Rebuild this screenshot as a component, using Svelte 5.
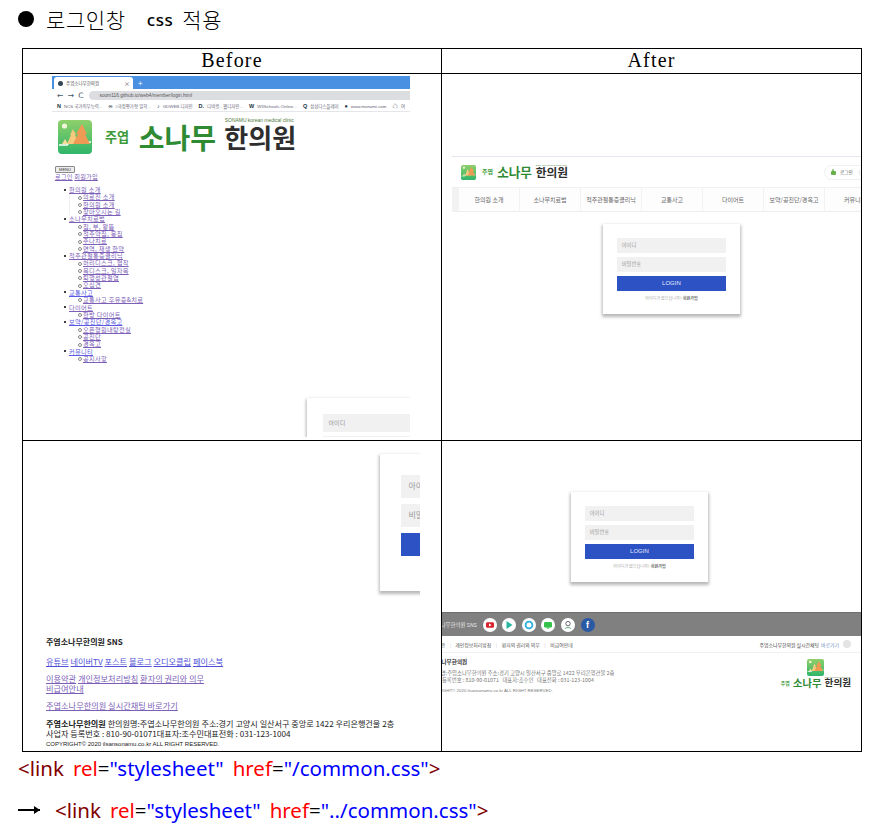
<script>
  const menu = [
    { t: '한의원 소개', c: ['의료진 소개', '한의원 소개', '찾아오시는 길'] },
    { t: '소나무치료법', c: ['침, 부, 왕뜸', '척추약침, 봉침', '추나치료', '면역, 재생 한약'] },
    { t: '척추관절통증클리닉', c: ['허리디스크, 협착', '목디스크, 일자목', '퇴행성관절염', '오십견'] },
    { t: '교통사고', blue: true, c: ['교통사고 후유증&치료'] },
    { t: '다이어트', c: ['한방 다이어트'] },
    { t: '보약/공진단/경옥고', blue: true, c: ['오픈형원내탕전실', '공진단', '경옥고'] },
    { t: '커뮤니티', blue: true, c: ['공지사항'] }
  ];
  const nav = ['한의원 소개', '소나무치료법', '척추관절통증클리닉', '교통사고', '다이어트', '보약/공진단/경옥고', '커뮤니티'];
  const marks = ['N', '∞', '♪', 'D.', 'W', 'Q', '●', '☁'];
  const bookmarks = ['NCS 국가직무능력...', '#과정평가형 일학...', 'GDWEB 디자인', '디비컷 - 웹디자인...', 'W3Schools Online...', '삼성디스플레이', 'www.monami.com', '여'];
</script>

{#snippet icon(cls)}
  <svg class={cls} viewBox="0 0 34 34">
    <defs>
      <linearGradient id="leaf" x1="0" y1="0" x2="0" y2="1">
        <stop offset="0" stop-color="#8fd06a" />
        <stop offset="1" stop-color="#2fb56a" />
      </linearGradient>
    </defs>
    <rect width="34" height="34" rx="4" fill="url(#leaf)" />
    <circle cx="6.5" cy="6" r="2.6" fill="#f4f6d8" />
    <path d="M1 25h8l3-3h21" fill="none" stroke="#fff" stroke-width="1.5" />
    <path d="M9 24l4-9-1 0 3-6 3 6-1 0 4 9z" fill="#f6c97e" />
    <path d="M15 24l5-10-2 0 6-10 5 10-2 0 5 10z" fill="#ee9a55" />
    <path d="M4 24l3-5 3 5z" fill="#f7dc9a" />
  </svg>
{/snippet}

{#snippet wordmark(cls)}
  <span class="wm {cls}">
    <b class="ju">주엽</b><b class="so">소나무</b>
    <span class="han"><i>SONAMU korean medical clinic</i><b>한의원</b></span>
  </span>
{/snippet}

{#snippet card(cls)}
  <div class="card {cls}">
    <div class="field">아이디</div>
    <div class="field">비밀번호</div>
    <div class="login">LOGIN</div>
    <p>아이디가 없으십니까? <b>회원가입</b></p>
  </div>
{/snippet}

{#snippet code(path)}
  <span class="br">&lt;link</span>
  <span class="at">rel</span>=<span class="st">"stylesheet"</span>
  <span class="at">href</span>=<span class="st">"{path}"</span><span class="br">&gt;</span>
{/snippet}

<div class="page">
  <h1><span class="dot"></span>로그인창<span class="css">css</span>적용</h1>

  <div class="table">
    <div class="head cell">Before</div>
    <div class="head cell last">After</div>

    <div class="cell one">
      <div class="shot">
        <div class="tabs">
          <div class="tab"><span class="fav"></span>주엽소나무한의원<span class="x">×</span></div>
          <span class="plus">+</span>
        </div>
        <div class="addr">
          <span class="arrows">← → C</span>
          <div class="url">soom116.github.io/web4/member/login.html</div>
        </div>
        <div class="bookmarks">
          {#each bookmarks as b, i}
            <span><em>{marks[i]}</em>{b}</span>
          {/each}
        </div>
        <div class="brand">
          {@render icon('ico')}
          {@render wordmark('big')}
        </div>
        <button class="menu">MENU</button>
        <div class="auth"><a href="#a" class="v">로그인</a> <a href="#a" class="v">회원가입</a></div>
        <ul class="tree">
          {#each menu as m}
            <li>
              <a href="#a" class:blue={m.blue}>{m.t}</a>
              <ul>
                {#each m.c as c}
                  <li><a href="#a">{c}</a></li>
                {/each}
              </ul>
            </li>
          {/each}
        </ul>
        <div class="crop one-crop">{@render card('mid')}</div>
      </div>
    </div>

    <div class="cell last two">
      <div class="site">
        <div class="site-head">
          {@render icon('ico-s')}
          {@render wordmark('small')}
          <div class="pill"><span class="lock"></span>로그인 <span class="sep">|</span> 회</div>
        </div>
        <div class="nav">
          {#each nav as n}
            <span>{n}</span>
          {/each}
        </div>
        {@render card('small-card top-card')}
      </div>
    </div>

    <div class="cell bottom three">
      <div class="crop three-crop">{@render card('large')}</div>
      <div class="foot">
        <h4>주엽소나무한의원 SNS</h4>
        <p class="links blue-links">
          <a href="#a">유튜브</a> <a href="#a">네이버TV</a> <a href="#a">포스트</a> <a href="#a">블로그</a> <a href="#a">오디오클립</a> <a href="#a">페이스북</a>
        </p>
        <p class="links">
          <a href="#a">이용약관</a> <a href="#a">개인정보처리방침</a> <a href="#a">환자의 권리와 의무</a><br />
          <a href="#a">비급여안내</a>
        </p>
        <p class="links"><a href="#a">주엽소나무한의원 실시간채팅 바로가기</a></p>
        <div class="addr-text">
          <b>주엽소나무한의원</b> 한의원명:주엽소나무한의원 주소:경기 고양시 일산서구 중앙로 1422 우리은행건물 2층<br />
          사업자 등록번호 : 810-90-01071대표자:조수민대표전화 : 031-123-1004
          <small>COPYRIGHT© 2020 ilsansonamu.co.kr ALL RIGHT RESERVED.</small>
        </div>
      </div>
    </div>

    <div class="cell last bottom four">
      {@render card('small-card bottom-card')}
      <div class="band">
        <span class="band-label">주엽소나무한의원 SNS</span>
        <span class="sns"><svg viewBox="0 0 14 14"><rect x="3" y="4.2" width="8" height="5.6" rx="1.4" fill="#d8232a" /><path d="M6 5.5l2.6 1.5L6 8.5z" fill="#fff" /></svg></span>
        <span class="sns"><svg viewBox="0 0 14 14"><path d="M4.5 3l6 4-6 4z" fill="#27b5a0" /></svg></span>
        <span class="sns"><svg viewBox="0 0 14 14"><circle cx="7" cy="7" r="3.4" fill="none" stroke="#26aee0" stroke-width="1.8" /></svg></span>
        <span class="sns"><svg viewBox="0 0 14 14"><rect x="3" y="4" width="8" height="5.4" rx="1.2" fill="#35c24a" /><path d="M5 9.4h4L7 11z" fill="#35c24a" /></svg></span>
        <span class="sns"><svg viewBox="0 0 14 14"><circle cx="7" cy="5.6" r="2.2" fill="none" stroke="#667" stroke-width="1" /><path d="M4 11c.6-2 5.4-2 6 0" fill="none" stroke="#6a8" stroke-width="1" /></svg></span>
        <span class="sns fb">f</span>
      </div>
      <div class="site-links">
        <span class="lk">이용약관</span><span class="bar">|</span>개인정보처리방침<span class="bar">|</span>환자의 권리와 의무<span class="bar">|</span>비급여안내
        <span class="chat">주엽소나무한의원 실시간채팅 <em>바로가기</em><i></i></span>
      </div>
      <div class="site-foot">
        <div class="site-addr">
          <b>주엽소나무한의원</b>
          <span>한의원명:주엽소나무한의원 주소:경기 고양시 일산서구 중앙로 1422 우리은행건물 2층</span>
          <span>사업자 등록번호 : 810-90-01071 &nbsp; 대표자:조수민 &nbsp; 대표전화 : 031-123-1004</span>
          <small>COPYRIGHT© 2020 ilsansonamu.co.kr ALL RIGHT RESERVED.</small>
        </div>
        <div class="site-logo">
          {@render icon('ico-f')}
          {@render wordmark('tiny')}
        </div>
      </div>
    </div>
  </div>

  <div class="code first">{@render code('/common.css')}</div>
  <div class="code second">
    <span class="arrow"></span>
    {@render code('../common.css')}
  </div>
</div>

<style>
  :global(body) {
    background: #fff;
  }

  .page {
    width: 881px;
    height: 836px;
    overflow: hidden;
    font-family: "Noto Sans CJK KR", sans-serif;
    color: #000;
  }

  h1 {
    display: flex;
    align-items: center;
    height: 38px;
    margin: 0 0 10px;
    padding-left: 18px;
    font-size: 21px;
    font-weight: 300;
    letter-spacing: 0.6px;
  }

  .dot {
    width: 16px;
    height: 16px;
    margin-right: 12px;
    border-radius: 50%;
    background: #000;
  }

  .css {
    margin: 0 9px 0 21px;
    font-family: "Noto Sans", sans-serif;
    font-size: 17px;
    font-weight: 500;
  }

  .table {
    display: grid;
    grid-template-columns: 419px 420px;
    grid-template-rows: 25px 367px 311px;
    width: 839px;
    margin-left: 22px;
    border-top: 1px solid #000;
    border-left: 1px solid #000;
  }

  .cell {
    overflow: hidden;
    border-right: 1px solid #000;
    border-bottom: 1px solid #000;
  }

  .head {
    display: flex;
    align-items: center;
    justify-content: center;
    padding-bottom: 2px;
    font-family: "Liberation Serif", serif;
    font-size: 20px;
    letter-spacing: 1.2px;
  }

  /* before, top */
  .shot {
    width: 358px;
    height: 361px;
    margin: 2px 0 0 29px;
    overflow: hidden;
  }

  .tabs {
    display: flex;
    align-items: flex-end;
    height: 13px;
    padding-left: 2px;
    background: #4a90e2;
  }

  .tab {
    display: flex;
    align-items: center;
    gap: 3px;
    width: 79px;
    height: 12px;
    padding-left: 4px;
    box-sizing: border-box;
    border-radius: 3px 3px 0 0;
    background: #fff;
    font-size: 4.5px;
    color: #555;
  }

  .fav {
    width: 5px;
    height: 5px;
    border-radius: 50%;
    background: #345;
  }

  .x {
    margin-left: auto;
    margin-right: 3px;
    font-size: 6px;
  }

  .plus {
    align-self: center;
    margin-left: 5px;
    font-size: 8px;
    line-height: 1;
    color: #fff;
  }

  .addr {
    display: flex;
    align-items: center;
    gap: 5px;
    height: 13px;
    padding-left: 5px;
  }

  .arrows {
    font-family: "DejaVu Sans", sans-serif;
    font-size: 7.5px;
    word-spacing: 2px;
    color: #456;
  }

  .url {
    flex: 1;
    height: 9px;
    padding-left: 11px;
    border-radius: 5px 0 0 5px;
    background: #dcdde1;
    font-family: "Liberation Sans", sans-serif;
    font-size: 4.8px;
    line-height: 9px;
    color: #555;
  }

  .bookmarks {
    display: flex;
    gap: 6px;
    height: 10px;
    padding-left: 5px;
    border-bottom: 1px solid #e6e6ea;
    box-sizing: border-box;
    font-family: "Liberation Sans", "Noto Sans CJK KR", sans-serif;
    font-size: 4.4px;
    line-height: 9px;
    white-space: nowrap;
    color: #667;
  }

  .bookmarks em {
    margin-right: 3px;
    font-style: normal;
    font-weight: 700;
    font-size: 5.5px;
    color: #234;
  }

  .brand {
    display: flex;
    gap: 13px;
    margin: 8px 0 0 6px;
  }

  .ico {
    flex: none;
    width: 34px;
    height: 34px;
  }

  .wm {
    display: flex;
    align-items: center;
    white-space: nowrap;
    font-size: 28px;
    line-height: 1;
  }

  .wm b {
    font-weight: 700;
  }

  .wm .ju {
    margin-right: 0.72em;
    font-size: 0.47em;
    color: #3d9a3a;
  }

  .wm .so {
    color: #2f8a34;
  }

  .wm .han {
    position: relative;
    display: block;
    margin-left: 0.32em;
    font-size: 0.93em;
    color: #2e2e2e;
  }

  .wm .han i {
    position: absolute;
    top: -1em;
    left: 0.1em;
    font-family: "Liberation Sans", sans-serif;
    font-size: 0.19em;
    font-style: normal;
    color: #4d7a3a;
  }

  .big {
    height: 34px;
  }

  .menu {
    display: block;
    width: 20px;
    height: 7px;
    margin: 12px 0 0 3px;
    padding: 0;
    border: 1px solid #888;
    border-radius: 1px;
    background: #eee;
    font-size: 4px;
    line-height: 5px;
    color: #333;
  }

  .auth {
    margin-left: 3px;
    font-size: 6.2px;
    line-height: 8px;
    letter-spacing: 0.2px;
  }

  a {
    color: #7d5fb8;
  }

  a.blue {
    color: #5a5ae6;
  }

  .tree,
  .tree ul {
    margin: 0;
    padding: 0;
    list-style: none;
  }

  .tree {
    margin: 5px 0 0 17px;
    font-size: 6.2px;
    line-height: 7.35px;
    letter-spacing: 0.3px;
  }

  .tree > li {
    position: relative;
  }

  .tree > li::before {
    content: "";
    position: absolute;
    top: 2.5px;
    left: -5px;
    width: 2px;
    height: 2px;
    border-radius: 50%;
    background: #000;
  }

  .tree ul {
    padding-left: 14px;
  }

  .tree > li:first-child ul {
    padding-left: 13px;
    border-left: 1px solid #eee;
  }

  .tree ul li {
    position: relative;
  }

  .tree ul li::before {
    content: "";
    position: absolute;
    top: 2.3px;
    left: -5px;
    width: 2px;
    height: 2px;
    border: 0.5px solid #888;
    border-radius: 50%;
  }

  /* login card */
  .crop {
    overflow: hidden;
  }

  .one-crop {
    margin: 29px 0 0 248px;
    padding: 7px 0 0 7px;
  }

  .three-crop {
    width: 40px;
    margin-left: 350px;
    padding: 13px 0 8px 7px;
  }

  .card {
    width: 22.8em;
    height: 15em;
    padding: 2.33em;
    box-sizing: border-box;
    background: #fff;
    box-shadow: 0 2px 3px 1px rgba(0, 0, 0, 0.28);
    font-size: 6px;
  }

  .mid {
    font-size: 6.9px;
  }

  .large {
    font-size: 9.1px;
  }

  .field {
    height: 2.84em;
    margin-bottom: 0.76em;
    padding-left: 0.9em;
    background: #f1f1f1;
    font-size: 0.88em;
    line-height: 2.84em;
    color: #999;
  }

  .login {
    height: 2.5em;
    background: #2c52c4;
    text-align: center;
    line-height: 2.5em;
    font-family: "Liberation Sans", sans-serif;
    font-size: 1em;
    color: #e8ecff;
  }

  .card p {
    margin: 0.9em 0 0;
    text-align: center;
    font-size: 0.68em;
    color: #aaa;
  }

  .card p b {
    font-weight: 500;
    color: #333;
  }

  .top-card {
    margin: 12px 0 0 151px;
  }

  .bottom-card {
    margin: 51px 0 0 129px;
  }

  /* after, top */
  .two {
    padding-top: 82px;
  }

  .site {
    margin-left: 10px;
    height: 283px;
    overflow: hidden;
    border-top: 1px solid #e6e6f0;
  }

  .site-head {
    display: flex;
    align-items: center;
    height: 30px;
    padding-left: 9px;
    box-sizing: border-box;
  }

  .ico-s {
    flex: none;
    width: 15px;
    height: 15px;
    margin-right: 6px;
  }

  .small {
    font-size: 12.6px;
  }

  .pill {
    flex: none;
    display: flex;
    align-items: center;
    gap: 3px;
    width: 47px;
    height: 15px;
    margin-left: auto;
    margin-right: -10px;
    padding-left: 6px;
    box-sizing: border-box;
    border: 1px solid #f0f0f0;
    border-radius: 8px;
    font-size: 4.6px;
    color: #555;
  }

  .lock {
    position: relative;
    width: 5px;
    height: 4px;
    margin: 1px 1px 0 0;
    border-radius: 1px;
    background: #6ab04a;
  }

  .lock::before {
    content: "";
    position: absolute;
    top: -2px;
    left: 1px;
    width: 2px;
    height: 2px;
    border: 0.5px solid #6ab04a;
    border-radius: 2px 2px 0 0;
    box-sizing: border-box;
  }

  .sep {
    margin-left: 3px;
    color: #bbb;
  }

  .nav {
    display: grid;
    grid-template-columns: repeat(7, 60px);
    gap: 1px;
    width: 430px;
    height: 23px;
    padding-left: 7px;
    border-top: 1px solid #f0f0f0;
    border-bottom: 1px solid #eee;
    background: #f2f2f2;
  }

  .nav span {
    display: flex;
    align-items: center;
    justify-content: center;
    background: #fdfdfd;
    font-size: 6px;
    color: #666;
  }

  /* before, bottom */
  .foot {
    margin: 38px 0 0 23px;
    font-size: 8.2px;
    line-height: 10px;
    color: #222;
  }

  .foot h4 {
    margin: 0 0 9px;
    font-size: 8px;
    line-height: 10px;
    font-weight: 700;
  }

  .links {
    margin: 0 0 7px;
    font-size: 8.2px;
    line-height: 10px;
  }

  .blue-links a {
    color: #4f4fd8;
  }

  .addr-text {
    margin-top: 9px;
    font-size: 8.15px;
    line-height: 10px;
    white-space: nowrap;
  }

  .addr-text small {
    display: block;
    font-family: "Liberation Sans", sans-serif;
    font-size: 6px;
    line-height: 10px;
  }

  /* after, bottom */
  .band {
    display: flex;
    align-items: center;
    gap: 5.6px;
    height: 24px;
    margin-top: 30px;
    border-top: 1px solid #6f6f6f;
    box-sizing: border-box;
    background: #808080;
  }

  .band-label {
    display: flex;
    flex: none;
    justify-content: flex-end;
    width: 35px;
    overflow: hidden;
    white-space: nowrap;
    font-size: 5.4px;
    color: #e8e8e8;
  }

  .sns {
    flex: none;
    width: 14px;
    height: 14px;
    border-radius: 50%;
    background: #fff;
  }

  .sns svg {
    display: block;
  }

  .fb {
    background: #2b5aa5;
    color: #fff;
    font-family: "Liberation Sans", sans-serif;
    font-size: 9px;
    font-weight: 700;
    line-height: 14px;
    text-align: center;
  }

  .site-links {
    display: flex;
    align-items: center;
    height: 16px;
    margin-left: -15px;
    padding-right: 10px;
    border-bottom: 1px solid #f1f1f1;
    white-space: nowrap;
    font-size: 4.9px;
    color: #555;
  }

  .bar {
    margin: 0 4.5px;
    color: #ccc;
  }

  .chat {
    display: flex;
    align-items: center;
    margin-left: auto;
    color: #444;
  }

  .chat em {
    margin-left: 2px;
    font-style: normal;
    color: #6b8fc0;
  }

  .chat i {
    width: 8px;
    height: 8px;
    margin-left: 4px;
    border-radius: 50%;
    background: #e4e4e4;
  }

  .site-foot {
    display: flex;
    justify-content: space-between;
    padding: 6px 10px 0 0;
  }

  .site-addr {
    display: flex;
    flex-direction: column;
    margin-left: -16px;
    white-space: nowrap;
    font-size: 5.35px;
    line-height: 7px;
    color: #777;
  }

  .site-addr b {
    margin-bottom: 4px;
    font-size: 5.6px;
    color: #333;
  }

  .site-addr small {
    margin-top: 3px;
    font-family: "Liberation Sans", sans-serif;
    font-size: 4.4px;
  }

  .site-logo {
    display: flex;
    flex-direction: column;
    align-items: center;
    gap: 2px;
  }

  .ico-f {
    width: 17px;
    height: 17px;
  }

  .tiny {
    font-size: 10.3px;
  }

  /* code lines */
  .code {
    display: flex;
    align-items: center;
    padding-left: 18px;
    font-family: "Noto Sans", sans-serif;
    font-size: 20.5px;
    line-height: 28px;
    color: #000;
    word-spacing: 4px;
    white-space: pre;
  }

  .first {
    margin-top: 2px;
  }

  .second {
    margin-top: 14px;
  }

  .code :global(span) {
    flex: none;
  }

  .br {
    color: #800000;
    margin-right: 9px;
  }

  .br:last-child {
    margin-right: 0;
  }

  .at {
    color: #f00;
  }

  .st {
    color: #00f;
    margin-right: 9px;
  }

  .st:nth-last-child(2) {
    margin-right: 0;
  }

  .arrow {
    position: relative;
    width: 22px;
    height: 2px;
    margin-right: 15px;
    background: #000;
  }

  .arrow::after {
    content: "";
    position: absolute;
    top: -3px;
    right: 0;
    width: 0;
    height: 0;
    border-left: 6px solid #000;
    border-top: 4px solid transparent;
    border-bottom: 4px solid transparent;
  }
</style>
